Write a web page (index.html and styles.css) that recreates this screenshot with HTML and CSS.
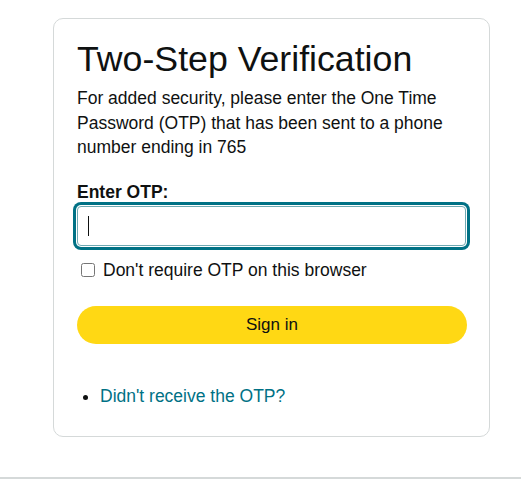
FILE: index.html
```html
<!DOCTYPE html>
<html lang="en">
<head>
<meta charset="utf-8">
<title>Two-Step Verification</title>
<link rel="stylesheet" href="styles.css">
</head>
<body>
<div class="page">
  <div class="card">
    <h1 class="title">Two-Step Verification</h1>
    <p class="intro">For added security, please enter the One Time Password (OTP) that has been sent to a phone number ending in 765</p>
    <label class="label" for="otp">Enter OTP:</label>
    <div class="input-wrap"><input id="otp" class="otp-input" type="text"></div>
    <label class="remember"><input type="checkbox" class="check"><span>Don't require OTP on this browser</span></label>
    <button class="signin" type="button">Sign in</button>
    <ul class="links">
      <li><a href="#" class="link">Didn't receive the OTP?</a></li>
    </ul>
  </div>
  <div class="divider"></div>
</div>
</body>
</html>
```
FILE: styles.css
```css
html, body {
  margin: 0;
  padding: 0;
  background: #fff;
}
body {
  font-family: "Liberation Sans", Arial, sans-serif;
  color: #0f1111;
  font-size: 17.5px;
  line-height: 24.5px;
}
.page {
  padding-top: 18px;
}
.card {
  margin-left: 53px;
  width: 437px;
  box-sizing: border-box;
  border: 1px solid #d5d9d9;
  border-radius: 10px;
  padding: 18px 23px 28px 23px;
}
.title {
  margin: 0 0 5px 0;
  font-size: 35.7px;
  line-height: 44px;
  font-weight: 400;
  letter-spacing: 0;
}
.intro {
  margin: 0;
}
.label {
  display: block;
  margin-top: 20px;
  font-weight: 700;
}
.input-wrap {
  margin-top: 2px;
}
.otp-input {
  display: block;
  box-sizing: border-box;
  width: 389px;
  height: 40px;
  border: 1px solid #6fa9b2;
  border-radius: 4px;
  box-shadow: 0 0 0 1px #fff, 0 0 0 4px #007185;
  outline: none;
  padding: 0 11px;
  font-family: inherit;
  font-size: 17px;
  background: linear-gradient(#0f1111, #0f1111) 10px 9px / 1px 20px no-repeat, #fff;
}
.remember {
  display: flex;
  align-items: center;
  margin-top: 12px;
  height: 24.5px;
}
.check {
  width: 14px;
  height: 14px;
  margin: 0 8px 0 4px;
}
.signin {
  display: block;
  margin-top: 23px;
  width: 390px;
  height: 38px;
  border: none;
  border-radius: 20px;
  background: #ffd814;
  color: #0f1111;
  font-family: inherit;
  font-size: 17px;
  padding: 0;
}
.links {
  margin: 40px 0 0 0;
  padding-left: 23px;
}
.link {
  color: #007185;
  text-decoration: none;
}
.divider {
  margin-top: 40px;
  height: 2px;
  background: #d5d9d9;
}
```
